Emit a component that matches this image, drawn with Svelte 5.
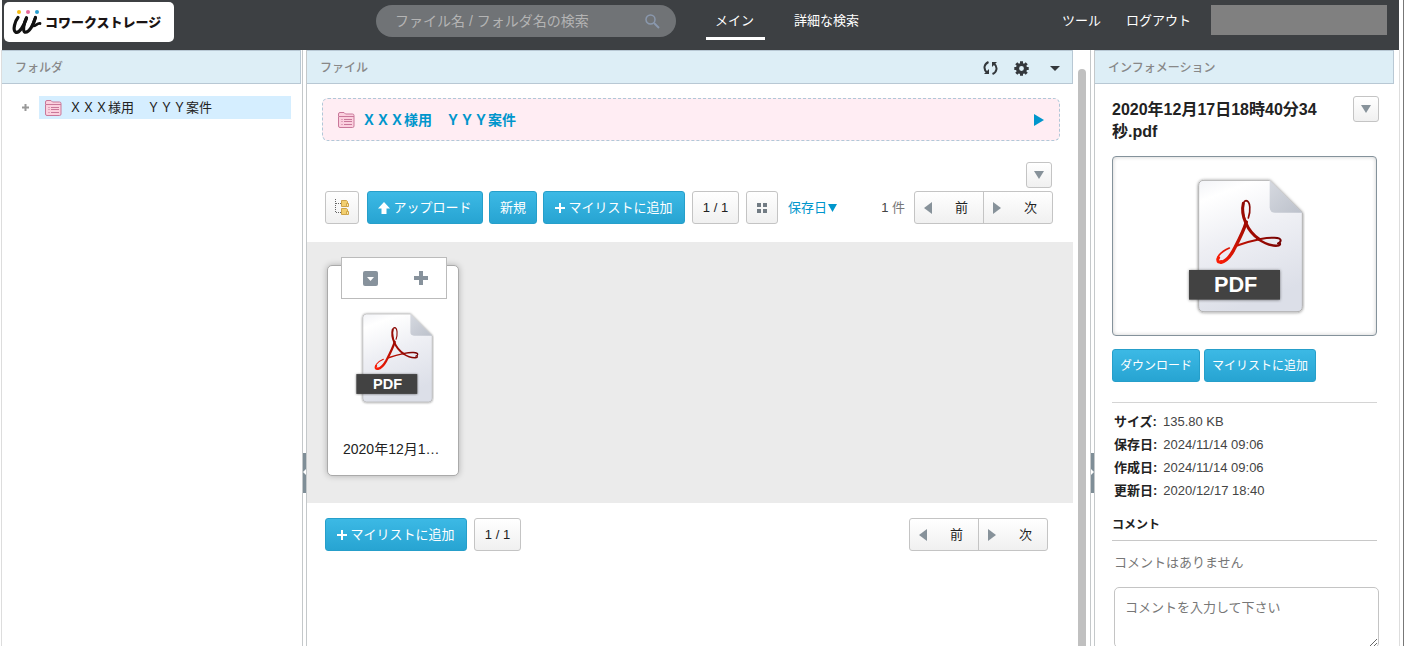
<script lang="ts">
    let query = $state('');
    let comment = $state('');

    const folderName = 'ＸＸＸ様用　ＹＹＹ案件';

    const details = [
        { label: 'サイズ', value: '135.80 KB' },
        { label: '保存日', value: '2024/11/14 09:06' },
        { label: '作成日', value: '2024/11/14 09:06' },
        { label: '更新日', value: '2020/12/17 18:40' },
    ];
</script>

{#snippet folderIcon()}
    <svg class="folder-icon" width="17" height="16" viewBox="0 0 17 16" fill="none" stroke="#c9789a">
        <path d="M.5 4.500V2q0-1.500 1.500-1.500h4l1.500 1.500h7q1.500 0 1.500 1.500v10.500q0 1.500-1.500 1.500h-12.500q-1.500 0-1.500-1.500z" fill="#fbd0de" />
        <path d="M1 4.500h15" />
        <path d="M3.500 7.500h1M3.500 9.500h1M3.500 12.500h1M6 7.500h8M6 9.500h8M6 12.500h8" />
    </svg>
{/snippet}

{#snippet pdfIcon(id: string)}
    <svg class="pdf-icon" viewBox="300 78 363 420">
        <defs>
            <linearGradient id="{id}-page" x1="0" y1="0" x2="0.3" y2="1">
                <stop offset="0" stop-color="#f2f3f7" />
                <stop offset="0.15" stop-color="#fff" />
                <stop offset="0.5" stop-color="#eeeff4" />
                <stop offset="1" stop-color="#dcdfe8" />
            </linearGradient>
            <linearGradient id="{id}-fold" x1="0" y1="0" x2="1" y2="1">
                <stop offset="0" stop-color="#d6d9e0" />
                <stop offset="1" stop-color="#bcc1cb" />
            </linearGradient>
            <linearGradient id="{id}-red" gradientUnits="userSpaceOnUse" x1="400" y1="330" x2="570" y2="230">
                <stop offset="0" stop-color="#fb1c05" />
                <stop offset="0.5" stop-color="#b50e02" />
                <stop offset="1" stop-color="#720202" />
            </linearGradient>
            <filter id="{id}-shadow" x="-10%" y="-10%" width="120%" height="120%">
                <feDropShadow dx="0" dy="1" stdDeviation="5" flood-color="#000" flood-opacity="0.5" />
            </filter>
        </defs>
        <path d="M360 91h197l98 97v281q0 16-16 16H360q-16 0-16-16V107q0-16 16-16z" fill="url(#{id}-page)" stroke="#b4b4b4" stroke-width="3" filter="url(#{id}-shadow)" />
        <path d="M557 91l98 97h-82q-16 0-16-16z" fill="url(#{id}-fold)" />
        <g fill="none" stroke="url(#{id}-red)" stroke-linecap="round">
            <path d="M493 204C500 184 500 153 486 152C473 152 475 190 485 218" stroke-width="5" />
            <path d="M478 160C473 180 477 200 485 218C496 244 509 257 526 268" stroke-width="9" />
            <path d="M487 216C477 248 462 275 448 302C437 322 424 334 411 337" stroke-width="10" />
            <path d="M415 336C400 341 396 327 405 316C413 306 424 299 436 294" stroke-width="5" />
            <path d="M411 335C402 339 398 331 404 323" stroke-width="9" />
            <path d="M455 288C480 279 504 272 530 267C560 261 590 262 590 271C590 275 588 278 582 280" stroke-width="6" />
            <path d="M520 266C536 276 561 289 580 287C586 286 588 284 588 282" stroke-width="7" />
        </g>
        <rect x="315" y="360" width="273" height="89" fill="#424242" filter="url(#{id}-shadow)" />
        <text x="455" y="427" text-anchor="middle" fill="#fff" font-family="Liberation Sans, sans-serif" font-size="65" font-weight="700">PDF</text>
    </svg>
{/snippet}

{#snippet plusIcon()}
    <svg width="10" height="10" viewBox="0 0 10 10"><path d="M5 0v10M0 5h10" stroke="#fff" stroke-width="2" /></svg>
{/snippet}

{#snippet caret()}
    <svg width="12" height="8" viewBox="0 0 12 8"><path d="M1 0h10L6 8z" fill="#87929a" /></svg>
{/snippet}

{#snippet pager()}
    <div class="pager">
        <button type="button">
            <svg width="8" height="12" viewBox="0 0 8 12"><path d="M8 0v12L0 6z" fill="#87929a" /></svg>
            <span>前</span>
        </button>
        <button type="button">
            <svg width="8" height="12" viewBox="0 0 8 12"><path d="M0 0v12l8-6z" fill="#87929a" /></svg>
            <span>次</span>
        </button>
    </div>
{/snippet}

<div class="app">
    <header>
        <a class="logo" href="#top" aria-label="コワークストレージ">
            <svg width="31" height="28" viewBox="0 0 31 28">
                <circle cx="8" cy="3" r="2" fill="#f7bd13" />
                <circle cx="17" cy="3" r="2" fill="#e8689a" />
                <circle cx="26" cy="3" r="2" fill="#2a9fd0" />
                <g fill="none" stroke="#111" stroke-linecap="round" stroke-linejoin="round">
                    <path d="M7 8.500C4 12 1.500 21 4.500 23C8 25 13 17 15.500 9" stroke-width="3.200" />
                    <path d="M15.500 9C12.500 15 11.500 22 14 23.200C18 24 22.500 16 24.500 8.500" stroke-width="3.200" />
                    <path d="M24.500 8.500C23 12 21 16 22 16.800C24 18 26 14 29 14.500" stroke-width="2.800" />
                </g>
            </svg>
            <span>コワークストレージ</span>
        </a>
        <form class="search" role="search">
            <input type="search" aria-label="検索" placeholder="ファイル名 / フォルダ名の検索" bind:value={query} />
            <button type="button" aria-label="検索する">
                <svg width="15" height="15" viewBox="0 0 15 15" fill="none" stroke="#8a98ad">
                    <circle cx="5.500" cy="5.500" r="4.500" stroke-width="1.500" />
                    <path d="M9 9l5 5" stroke-width="2" />
                </svg>
            </button>
        </form>
        <nav class="tabs">
            <a class="active" href="#main">メイン</a>
            <a href="#search">詳細な検索</a>
        </nav>
        <nav class="account">
            <a href="#tools">ツール</a>
            <a href="#logout">ログアウト</a>
            <div class="user"></div>
        </nav>
    </header>

    <main>
        <aside class="folders">
            <h2 class="panel-title">フォルダ</h2>
            <div class="tree">
                <button class="expand" type="button" aria-label="展開">
                    <svg width="7" height="7" viewBox="0 0 7 7"><path d="M3.500 0v7M0 3.500h7" stroke="#999" stroke-width="2" /></svg>
                </button>
                <a class="tree-item" href="#folder">
                    {@render folderIcon()}
                    <span>{folderName}</span>
                </a>
            </div>
        </aside>

        <div class="splitter">
            <button type="button" aria-label="フォルダを閉じる">
                <svg width="3" height="6" viewBox="0 0 3 6"><path d="M3 0v6L0 3z" fill="#fff" /></svg>
            </button>
        </div>

        <section class="files">
            <div class="files-body">
                <div class="panel-title">
                    <h2>ファイル</h2>
                    <button type="button" aria-label="更新">
                        <svg width="15" height="14" viewBox="0 0 15 14" fill="none" stroke="#34383c" stroke-width="2">
                            <path d="M5.500 1C1 3 0 8 4 11.500" />
                            <path d="M9.500 13C14 11 15 6 11 2.500" />
                            <path d="M1 13h5V8z" fill="#34383c" stroke="none" />
                            <path d="M14 1H9v5z" fill="#34383c" stroke="none" />
                        </svg>
                    </button>
                    <button type="button" aria-label="設定">
                        <svg width="15" height="15" viewBox="0 0 15 15" fill="none" stroke="#34383c">
                            <circle cx="7.500" cy="7.500" r="4" stroke-width="3.200" />
                            <path d="M7.500 .3v3M7.500 11.700v3M.3 7.500h3M11.700 7.500h3M2.300 2.300l2 2M10.700 10.700l2 2M12.700 2.300l-2 2M4.300 10.700l-2 2" stroke-width="3" />
                        </svg>
                    </button>
                    <button class="menu" type="button" aria-label="メニュー">
                        <svg width="10" height="5" viewBox="0 0 10 5"><path d="M0 0h10L5 5z" fill="#34383c" /></svg>
                    </button>
                </div>

                <a class="path" href="#folder">
                    {@render folderIcon()}
                    <span>{folderName}</span>
                    <svg width="10" height="12" viewBox="0 0 10 12"><path d="M0 0v12l10-6z" fill="#0096cc" /></svg>
                </a>

                <div class="options">
                    <button class="btn square" type="button" aria-label="オプション">{@render caret()}</button>
                </div>

                <div class="toolbar">
                    <button class="btn tree-btn" type="button" aria-label="ツリー表示">
                        <svg width="15" height="17" viewBox="0 0 15 17">
                            <path d="M.5 0v14M1 4.500h5M1 13.500h5" fill="none" stroke="#666" stroke-dasharray="1 1" />
                            <path d="M6.500 1.500h5l1 1v5h-6zM6.500 9.500h5l1 1v5h-6z" fill="#f2cf70" stroke="#cfa548" />
                            <path d="M11.500 4.500h2v3h-2zM11.500 12.500h2v3h-2z" fill="#fbe8ac" stroke="#cfa548" />
                        </svg>
                    </button>
                    <button class="btn primary upload" type="button">
                        <svg width="12" height="12" viewBox="0 0 12 12"><path d="M6 0l6 6.500H8.500V12h-5V6.500H0z" fill="#fff" /></svg>
                        アップロード
                    </button>
                    <button class="btn primary new" type="button">新規</button>
                    <button class="btn primary add" type="button">{@render plusIcon()}マイリストに追加</button>
                    <button class="btn count" type="button">1 / 1</button>
                    <button class="btn view" type="button" aria-label="表示切替">
                        <svg width="10" height="10" viewBox="0 0 10 10"><path d="M0 0h4v4H0zM6 0h4v4H6zM0 6h4v4H0zM6 6h4v4H6z" fill="#727c84" /></svg>
                    </button>
                    <button class="sort" type="button">
                        保存日<svg width="9" height="8" viewBox="0 0 9 8"><path d="M0 0h9L4.500 8z" fill="#0096cc" /></svg>
                    </button>
                    <span class="total"><b>1</b> 件</span>
                    {@render pager()}
                </div>

                <div class="grid">
                    <article class="card">
                        <div class="card-tools">
                            <button type="button" aria-label="ファイルメニュー">
                                <svg width="15" height="15" viewBox="0 0 15 15">
                                    <rect width="15" height="15" rx="2" fill="#87929c" />
                                    <path d="M4 6h7l-3.500 4z" fill="#fff" />
                                </svg>
                            </button>
                            <button type="button" aria-label="追加">
                                <svg width="14" height="14" viewBox="0 0 14 14"><path d="M5 0h4v5h5v4H9v5H5V9H0V5h5z" fill="#87929c" /></svg>
                            </button>
                        </div>
                        {@render pdfIcon('card')}
                        <a href="#file">2020年12月1…</a>
                    </article>
                </div>

                <div class="toolbar bottom">
                    <button class="btn primary add" type="button">{@render plusIcon()}マイリストに追加</button>
                    <button class="btn count" type="button">1 / 1</button>
                    {@render pager()}
                </div>
            </div>
            <div class="scrollbar"></div>
        </section>

        <div class="splitter">
            <button type="button" aria-label="インフォメーションを閉じる">
                <svg width="3" height="6" viewBox="0 0 3 6"><path d="M0 0v6l3-3z" fill="#fff" /></svg>
            </button>
        </div>

        <aside class="info">
            <h2 class="panel-title">インフォメーション</h2>
            <div class="info-body">
                <div class="info-head">
                    <h3>2020年12月17日18時40分34秒.pdf</h3>
                    <button class="btn square" type="button" aria-label="操作">{@render caret()}</button>
                </div>
                <div class="preview">{@render pdfIcon('preview')}</div>
                <div class="actions">
                    <button class="btn primary" type="button">ダウンロード</button>
                    <button class="btn primary" type="button">マイリストに追加</button>
                </div>
                <dl>
                    {#each details as { label, value }}
                        <div>
                            <dt>{label}:</dt>
                            <dd>{value}</dd>
                        </div>
                    {/each}
                </dl>
                <h4><label for="comment">コメント</label></h4>
                <p>コメントはありません</p>
                <textarea id="comment" placeholder="コメントを入力して下さい" bind:value={comment}></textarea>
            </div>
        </aside>
    </main>
</div>

<style>
    :global(body) {
        margin: 0;
        background: #fff;
    }
    .app,
    .app * {
        box-sizing: border-box;
    }
    .app {
        height: 100vh;
        overflow: hidden;
        display: flex;
        flex-direction: column;
        padding: 0 3px 0 1px;
        border-right: 1px solid #777;
        font-family: 'Liberation Sans', 'Noto Sans CJK JP', sans-serif;
        font-size: 13px;
        line-height: 20px;
        color: #222;
    }
    svg {
        display: block;
        flex: none;
    }
    button,
    input,
    textarea {
        font: inherit;
        color: inherit;
    }
    button {
        border: none;
        background: none;
        padding: 0;
        cursor: pointer;
        white-space: nowrap;
    }
    a {
        color: inherit;
        text-decoration: none;
    }
    h2,
    h3,
    h4,
    p,
    dl,
    dd {
        margin: 0;
    }

    header {
        flex: none;
        display: flex;
        height: 50px;
        margin: 0 1px;
        background: #3d4043;
        color: #fff;
    }
    .logo {
        display: flex;
        align-items: center;
        gap: 3px;
        width: 170px;
        height: 40px;
        margin: 2px 202px 0 2px;
        padding: 2px 0 0 7px;
        border-radius: 5px;
        background: #fff;
        color: #1a1414;
        font-size: 13px;
        font-weight: 900;
        white-space: nowrap;
    }
    .search {
        display: flex;
        align-items: center;
        width: 300px;
        height: 32px;
        margin-top: 5px;
        padding: 0 16px 0 19px;
        border-radius: 16px;
        background: #707376;
    }
    .search input {
        flex: 1;
        min-width: 0;
        padding: 0;
        border: none;
        outline: none;
        background: none;
        font-size: 14px;
    }
    .search input::placeholder {
        color: #b4b4b4;
        opacity: 1;
    }
    .tabs {
        display: flex;
        gap: 20px;
        margin-left: 30px;
    }
    .tabs a {
        height: 40px;
        padding: 11px 10px 0 9px;
        border-right: 1px solid transparent;
        white-space: nowrap;
    }
    .tabs .active {
        padding-right: 11px;
        border-right: none;
        border-bottom: 3px solid #fff;
    }
    .account {
        display: flex;
        gap: 25px;
        margin-left: auto;
        padding: 11px 12px 0 0;
        white-space: nowrap;
    }
    .user {
        width: 176px;
        height: 30px;
        margin: -6px 0 0 -5px;
        background: #808080;
    }

    main {
        flex: 1;
        min-height: 0;
        display: flex;
        border-left: 1px solid #ddd;
        border-right: 1px solid #ddd;
    }
    .panel-title {
        display: flex;
        align-items: center;
        height: 34px;
        padding: 2px 0 0 13px;
        border: 1px solid #b8c8d4;
        border-left: none;
        background: #ddeef6;
        color: #888;
        font-size: 12px;
        font-weight: 500;
    }
    .folders {
        flex: none;
        width: 299px;
    }
    .tree {
        display: flex;
        align-items: center;
        gap: 10px;
        padding: 12px 10px 0 20px;
    }
    .tree-item {
        flex: 1;
        display: flex;
        align-items: center;
        gap: 7px;
        height: 23px;
        padding-left: 6px;
        background: #d5eeff;
    }

    .splitter {
        flex: none;
        display: flex;
        align-items: flex-start;
        width: 5px;
        margin-left: 1px;
        border: 1px solid #c4c8ca;
        border-width: 0 1px;
    }
    .splitter button {
        display: flex;
        align-items: center;
        width: 3px;
        height: 40px;
        margin-top: 403px;
        padding-bottom: 3px;
        background: #7f8e97;
    }

    .files {
        flex: 1;
        min-width: 0;
        display: flex;
    }
    .files-body {
        flex: 1;
        min-width: 0;
    }
    .scrollbar {
        width: 8px;
        margin: 19px 3px 0 5px;
        border-radius: 4px 4px 0 0;
        background: #c0c0c0;
    }
    .files .panel-title {
        gap: 16px;
        padding-right: 12px;
    }
    .panel-title h2 {
        margin-right: auto;
        font-size: 12px;
        font-weight: 500;
    }
    .panel-title .menu {
        margin-left: 5px;
    }
    .path {
        display: flex;
        align-items: center;
        gap: 7px;
        height: 43px;
        margin: 14px 13px 21px 15px;
        padding: 0 15px;
        border: 1px dashed #b0c8d8;
        border-radius: 6px;
        background: #ffedf3;
        color: #0096cc;
        font-size: 14px;
        font-weight: 700;
    }
    .path span {
        flex: 1;
    }
    .options {
        display: flex;
        justify-content: flex-end;
        padding-right: 21px;
    }

    .btn {
        display: flex;
        align-items: center;
        justify-content: center;
        height: 33px;
        border: 1px solid #c4c4c4;
        border-radius: 3px;
        background: linear-gradient(#fff, #f0f0f0);
    }
    .primary {
        gap: 3px;
        border-color: #269fca;
        background: linear-gradient(#3cb9e5, #27a4d2);
        color: #fff;
    }
    .square {
        flex: none;
        width: 26px;
        height: 26px;
    }
    .toolbar {
        display: flex;
        align-items: center;
        padding: 3px 20px 18px 18px;
    }
    .tree-btn {
        width: 34px;
        margin-right: 8px;
    }
    .upload {
        width: 116px;
        margin-right: 6px;
    }
    .new {
        width: 48px;
        margin-right: 6px;
    }
    .add {
        width: 142px;
        margin-right: 7px;
    }
    .count {
        width: 47px;
        margin-right: 7px;
    }
    .view {
        width: 32px;
    }
    .sort {
        display: flex;
        align-items: center;
        gap: 1px;
        margin-left: 10px;
        color: #0096cc;
    }
    .total {
        margin-left: auto;
        margin-right: 9px;
        color: #777;
        white-space: nowrap;
    }
    .total b {
        color: #444;
        font-weight: 400;
    }
    .pager {
        display: flex;
        height: 33px;
        border: 1px solid #c4c4c4;
        border-radius: 3px;
        background: linear-gradient(#fff, #f0f0f0);
    }
    .pager button {
        display: flex;
        align-items: center;
        gap: 23px;
        width: 68px;
        padding-left: 9px;
    }
    .pager button + button {
        width: 69px;
        border-left: 1px solid #c4c4c4;
    }
    .bottom {
        padding: 15px 25px 15px 18px;
    }
    .bottom .pager {
        margin-left: auto;
    }

    .grid {
        padding: 23px 20px 27px;
        background: #ebebeb;
    }
    .card {
        position: relative;
        display: flex;
        flex-direction: column;
        justify-content: space-between;
        width: 132px;
        height: 211px;
        padding: 45px 15px 16px;
        border: 1px solid #aaa;
        border-radius: 5px;
        background: #fff;
        box-shadow: 0 0 6px rgba(0, 0, 0, 0.25);
        font-size: 14px;
        white-space: nowrap;
    }
    .card-tools {
        position: absolute;
        top: -9px;
        left: 13px;
        display: flex;
        align-items: center;
        justify-content: space-between;
        width: 106px;
        height: 42px;
        padding: 0 18px 0 21px;
        border: 1px solid #bbb;
        background: #fff;
    }
    .card .pdf-icon {
        align-self: center;
        width: 81px;
        height: 94px;
    }

    .info {
        flex: none;
        width: 304px;
        padding-right: 5px;
    }
    .info-body {
        padding: 12px 15px 0 17px;
    }
    .info-head {
        display: flex;
        justify-content: space-between;
        height: 60px;
    }
    .info-head h3 {
        width: 210px;
        padding-top: 3px;
        font-size: 16px;
        line-height: 22px;
    }
    .preview {
        display: flex;
        justify-content: center;
        align-items: center;
        height: 180px;
        margin-right: 2px;
        border: 1px solid #84929b;
        border-radius: 4px;
        box-shadow: inset 0 0 4px rgba(0, 0, 0, 0.2);
    }
    .preview .pdf-icon {
        width: 121px;
        height: 140px;
    }
    .actions {
        display: flex;
        gap: 4px;
        margin-right: 2px;
        padding: 13px 0 20px;
        border-bottom: 1px solid #d4d4d4;
        font-size: 12px;
    }
    .actions .btn {
        padding: 0 7px;
    }
    dl {
        padding: 7px 2px 13px;
    }
    dl div {
        display: flex;
        gap: 6px;
        line-height: 23px;
    }
    dt {
        font-weight: 700;
    }
    dd {
        color: #444;
    }
    h4 {
        margin-right: 2px;
        padding-bottom: 5px;
        border-bottom: 1px solid #c8c8c8;
        font-size: 12px;
    }
    p {
        padding: 12px 2px 14px;
        color: #777;
    }
    textarea {
        display: block;
        width: calc(100% - 2px);
        height: 61px;
        margin-left: 2px;
        padding: 10px;
        border: 1px solid #c4c4c4;
        border-radius: 5px;
        outline: none;
        resize: both;
    }
    textarea::placeholder {
        color: #777;
        opacity: 1;
    }
</style>
